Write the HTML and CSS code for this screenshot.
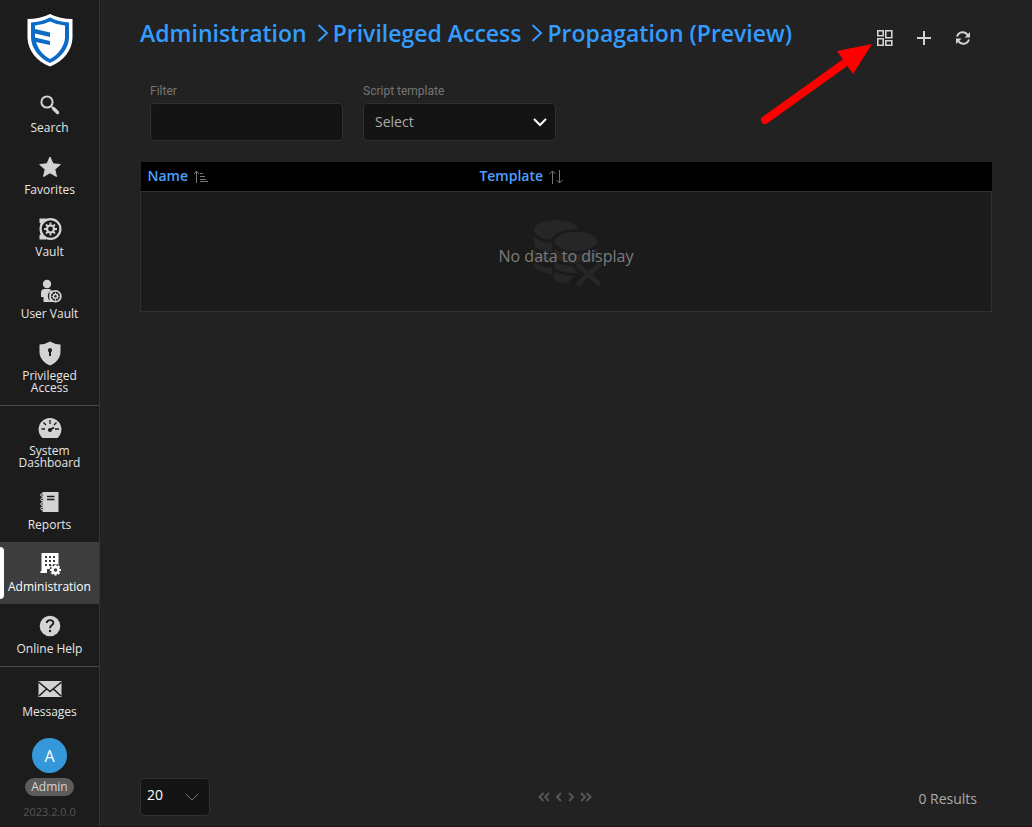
FILE: index.html
```html
<!DOCTYPE html>
<html lang="en">
<head>
<meta charset="utf-8">
<title>Propagation (Preview)</title>
<link rel="stylesheet" href="styles.css">
</head>
<body>
<div class="app">
  <nav class="sidebar" aria-label="Main">
    <a class="logo" href="#" aria-label="Home">
      <svg width="46" height="54" viewBox="0 0 46 54">
        <path fill="#fff" d="M23 1Q33 6 45.500 6V25C45 37 37 48 23 53.500C9 48 1 37 .500 25V6Q13 6 23 1Z"/>
        <path fill="#0d6bc8" d="M23 4.500Q32 9 42 9.500V25C41.500 35 34 45 23 50C12 45 4.500 35 4 25V9.500Q14 9 23 4.500Z"/>
        <path fill="#fff" d="M23 8.500Q30 12 38 12.500V25C37.500 33 31 42 23 46C16 42 11 36 9 29L23 32V28L8 24.500V20.500L23 24V19.500L8 16V12.500Q16 12 23 8.500Z"/>
      </svg>
    </a>
    <div class="group">
      <a class="item" href="#"><svg class="icon" viewBox="0 0 22 22"><circle cx="8" cy="8" r="5.600" fill="none" stroke="#d3d3d3" stroke-width="2"/><path d="M14.500 14.500L18.500 18.500" stroke="#d3d3d3" stroke-width="3.400" stroke-linecap="round"/><path d="M12 12L15 15" stroke="#d3d3d3" stroke-width="1.500"/></svg><span>Search</span></a>
      <a class="item" href="#"><svg class="icon" viewBox="0 0 22 22"><path fill="#d3d3d3" stroke="#d3d3d3" stroke-linejoin="round" d="M11 1L14 7.800L21.300 8.500L15.800 13.400L17.500 20.500L11 16.800L4.500 20.500L6.200 13.400L.700 8.500L8 7.800Z"/></svg><span>Favorites</span></a>
      <a class="item" href="#"><svg class="icon" viewBox="0 0 22 22"><path fill="#d3d3d3" d="M.500 .500H7V21.500H.500V17H1.500V5H.500Z"/><circle cx="11.500" cy="11" r="9.900" fill="#1c1c1c" stroke="#d3d3d3" stroke-width="2.200"/><circle cx="11.500" cy="11" r="3.500" fill="none" stroke="#d3d3d3" stroke-width="2.200"/><path stroke="#d3d3d3" stroke-width="1.800" d="M11.500 4.500V8M11.500 14V17.500M5 11H8M15 11H18M7 6.500L9.200 8.700M13.800 13.300L16 15.500M16 6.500L13.800 8.700M9.200 13.300L7 15.500"/></svg><span>Vault</span></a>
      <a class="item" href="#"><svg class="icon" viewBox="0 0 22 22"><g fill="#d3d3d3"><circle cx="8" cy="4" r="4.200"/><path d="M5.500 9H11.500V22H4.500V17H2V13Q2 9 5.500 9Z"/></g><circle cx="16" cy="16" r="7.200" fill="#1c1c1c"/><path fill="#d3d3d3" d="M10.500 10.500H14V22H10.500Z"/><circle cx="16.500" cy="16.300" r="5.400" fill="#1c1c1c" stroke="#d3d3d3" stroke-width="1.700"/><circle cx="16.500" cy="16.300" r="2" fill="none" stroke="#d3d3d3" stroke-width="1.400"/><path stroke="#d3d3d3" d="M16.500 12.500V15M16.500 18V20.500M12.500 16.300H15M18 16.300H20.500M13.800 13.600L15.500 15.300M17.500 17.300L19.200 19M19.200 13.600L17.500 15.300M15.500 17.300L13.800 19"/></svg><span>User Vault</span></a>
      <a class="item" href="#"><svg class="icon" viewBox="0 0 22 22"><path fill="#d3d3d3" d="M11-.500Q16 2.500 21.500 2.500V10C21.500 16 17 21 11 23.500C5 21 .500 16 .500 10V2.500Q6 2.500 11-.500Z"/><path fill="#1c1c1c" d="M11 6A2.300 2.300 0 0 1 12 10.200V14H10V10.200A2.300 2.300 0 0 1 11 6Z"/></svg><span>Privileged<br>Access</span></a>
    </div>
    <div class="group">
      <a class="item" href="#"><svg class="icon" viewBox="0 0 22 22"><path fill="#d3d3d3" d="M3.500 21A11.400 11.400 0 1 1 18.500 21Z"/><path stroke="#1c1c1c" stroke-width="1.300" d="M11 3V7M4.500 5.500L7 8M17.500 5.500L15 8M2.500 12H6M16 12H20"/><path stroke="#1c1c1c" stroke-width="2" d="M10 13.500L15 10.500"/><circle cx="11" cy="13" r="2" fill="#1c1c1c"/></svg><span>System<br>Dashboard</span></a>
      <a class="item" href="#"><svg class="icon" viewBox="0 0 22 22"><path fill="#d3d3d3" d="M3.500 1H19.500V21H3.500Z"/><g fill="#1c1c1c" stroke="#d3d3d3"><circle cx="3" cy="4" r="1.300"/><circle cx="3" cy="8.500" r="1.300"/><circle cx="3" cy="13" r="1.300"/><circle cx="3" cy="17.500" r="1.300"/></g><path stroke="#1c1c1c" stroke-width="1.400" d="M8 5.500H15.500M8 8.500H15.500"/></svg><span>Reports</span></a>
      <a class="item active" href="#" aria-current="page"><svg class="icon" viewBox="0 0 22 22"><path fill="#fff" d="M2.500 0H19.500V20H1.500V18H2.500Z"/><path stroke="#3d3d3d" stroke-width="2" stroke-dasharray="2 2" d="M6 4H18M6 8H18M6 12H18"/><path fill="#3d3d3d" d="M8 16H11V20H8Z"/><circle cx="16.500" cy="17" r="6" fill="#3d3d3d"/><circle cx="16.500" cy="17" r="3" fill="none" stroke="#fff" stroke-width="2.400"/><path stroke="#fff" stroke-width="2.200" d="M16.500 11.500V14M16.500 20V22.500M11 17H13.500M19.500 17H22M12.600 13.100L14.300 14.800M18.700 19.200L20.400 20.900M20.400 13.100L18.700 14.800M14.300 19.200L12.600 20.900"/></svg><span>Administration</span></a>
      <a class="item" href="#"><svg class="icon" viewBox="0 0 22 22"><circle cx="11" cy="11" r="10.300" fill="#d3d3d3"/><path fill="none" stroke="#1c1c1c" stroke-width="1.900" d="M7.800 8C8 4.200 14.300 4.200 14.300 8C14.300 10.500 11 10.200 11 13.300"/><circle cx="11" cy="16" r="1.200" fill="#1c1c1c"/></svg><span>Online Help</span></a>
    </div>
    <div class="group">
      <a class="item" href="#"><svg class="icon" viewBox="0 0 22 22"><path fill="#d3d3d3" d="M-.500 3H22.500V19H-.500Z"/><path fill="none" stroke="#1c1c1c" stroke-width="1.600" d="M-.500 4L11 13.500L22.500 4M0 18L7.500 11M22 18L14.500 11"/></svg><span>Messages</span></a>
    </div>
    <button class="avatar" type="button">A</button>
    <span class="badge">Admin</span>
    <span class="version">2023.2.0.0</span>
  </nav>

  <main class="main">
    <header class="header">
      <h1 class="crumbs">
        <a href="#">Administration</a>
        <svg width="12" height="18" viewBox="0 0 12 18"><path d="M1.500 1L10 9L1.500 17"/></svg>
        <a href="#">Privileged Access</a>
        <svg width="12" height="18" viewBox="0 0 12 18"><path d="M1.500 1L10 9L1.500 17"/></svg>
        <a href="#">Propagation (Preview)</a>
      </h1>
      <div class="toolbar">
        <button type="button" aria-label="Templates"><svg class="tiles" width="18" height="18" viewBox="0 0 18 18"><path d="M1.800 1.800H7.200V6.800H1.800ZM9.800 1.800H15.800V8.800H9.800ZM1.800 9.800H7.200V16.200H1.800ZM9.800 11.800H15.800V16.200H9.800Z"/></svg></button>
        <button type="button" aria-label="Add"><svg width="18" height="18" viewBox="0 0 18 18"><path d="M9 2V16M2 9H16"/></svg></button>
        <button type="button" aria-label="Refresh"><svg width="18" height="18" viewBox="0 0 18 18"><path d="M3 7.500C5 2 11 2 13.500 6M15 10.500C13 16 7 16 4.500 12"/><path class="solid" d="M16 3V8.500H10.500ZM2 15V9.500H7.500Z"/></svg></button>
        <svg class="pointer" width="112" height="84" viewBox="0 0 112 84"><path d="M7 78L88 20" stroke="#f00" stroke-width="8" stroke-linecap="round"/><path fill="#f00" d="M114 2L79 9L95 32Z"/></svg>
      </div>
    </header>

    <form class="filters">
      <div class="field"><label for="filter">Filter</label><input id="filter" type="text"></div>
      <div class="field"><label for="template">Script template</label>
        <div class="select"><select id="template"><option>Select</option></select><svg width="14" height="9" viewBox="0 0 14 9"><path d="M1 1L7 7L13 1"/></svg></div>
      </div>
    </form>

    <table class="grid">
      <thead><tr>
        <th class="name" scope="col">Name<svg width="16" height="14" viewBox="0 0 16 14"><path d="M3.500 13V1M1 4L3.500 1L6 4M7 3.500H10M7 6.500H12M7 9.500H13M7 11.500H15"/></svg></th>
        <th scope="col">Template<svg width="16" height="14" viewBox="0 0 16 14"><path d="M4.500 14V1M1.500 4L4.500 1L7.500 4M11.500 0V13M8.500 10L11.500 13L14.500 10"/></svg></th>
      </tr></thead>
      <tbody><tr><td colspan="2">
        <div class="empty">
          <svg width="70" height="68" viewBox="0 0 70 68"><g fill="#262626"><ellipse cx="23" cy="10" rx="22" ry="10"/><path d="M1 16Q6 22 19 23V32Q5 31 1 26ZM1 30Q6 35 19 36V43Q5 42 1 38ZM1 42Q6 47 19 48V54Q4 52 1 46Z"/><ellipse cx="43" cy="21.500" rx="23" ry="11" stroke="#1b1b1b" stroke-width="3"/><path d="M21 28Q27 34 43 34Q59 34 65 28V37Q58 43 43 44Q27 43 21 37ZM21 41Q28 46 39 46L45 53Q25 53 21 47ZM21 51Q28 56 41 56L34 64Q23 62 21 58Z"/></g><path d="M43 44L67 66M67 44L43 66" stroke="#1b1b1b" stroke-width="9"/><path d="M44 44L67 65M67 44L44 65" stroke="#262626" stroke-width="5"/></svg>
          <span>No data to display</span>
        </div>
      </td></tr></tbody>
    </table>

    <footer class="footer">
      <div class="select pages"><select aria-label="Page size"><option>20</option></select><svg width="14" height="9" viewBox="0 0 14 9"><path d="M1 1L7 7L13 1"/></svg></div>
      <div class="pager">
        <button type="button" aria-label="First page"><svg width="12" height="10" viewBox="0 0 12 10"><path d="M5.500 1L1.500 5L5.500 9M11 1L7 5L11 9"/></svg></button>
        <button type="button" aria-label="Previous page"><svg width="6" height="10" viewBox="0 0 6 10"><path d="M5 1L1 5L5 9"/></svg></button>
        <button type="button" aria-label="Next page"><svg width="6" height="10" viewBox="0 0 6 10"><path d="M1 1L5 5L1 9"/></svg></button>
        <button type="button" aria-label="Last page"><svg width="12" height="10" viewBox="0 0 12 10"><path d="M1 1L5 5L1 9M6.500 1L10.500 5L6.500 9"/></svg></button>
      </div>
      <span class="results">0 Results</span>
    </footer>
  </main>
</div>
</body>
</html>
```
FILE: styles.css
```css
* { box-sizing: border-box; }
body { margin: 0; background: #222; color: #d3d3d3; font-family: "Open Sans", sans-serif; font-size: 14px; }
a { color: inherit; text-decoration: none; }
button { padding: 0; border: 0; background: none; color: inherit; font: inherit; }
svg { display: block; flex: none; fill: none; }

.app { display: grid; grid-template-columns: 100px 1fr; min-height: 100vh; border-bottom: 1px solid #1a171a; }

.sidebar { display: flex; flex-direction: column; align-items: center; background: #1c1c1c; border-right: 1px solid #343434; }
.logo { padding: 13px 0 16px; }
.group { width: 100%; }
.group + .group { border-top: 1px solid #484848; }
.item { display: flex; flex-direction: column; align-items: center; gap: 6px; padding: 11px 0; font-size: 12px; line-height: 12px; text-align: center; color: #e6e6e6; }
.icon { width: 22px; height: 22px; overflow: visible; }
.active { position: relative; background: #3d3d3d; color: #fff; }
.active::before { content: ""; position: absolute; left: 0; top: 5px; bottom: 5px; width: 4px; background: #fff; border-radius: 0 4px 4px 0; }
.avatar { width: 35px; height: 35px; margin-top: 9px; border-radius: 50%; background: #3498db; color: #fff; font-size: 16px; font-weight: 500; }
.badge { margin-top: 5px; padding: 0 6px; border-radius: 9px; background: #5c5c5c; font-size: 12px; line-height: 18px; }
.version { margin-top: 8px; font-size: 11px; line-height: 16px; color: #555; }

.main { display: flex; flex-direction: column; padding: 16px 40px 10px; }
.header { display: flex; justify-content: space-between; align-items: flex-start; }
.crumbs { display: flex; align-items: center; gap: 4px; margin: 0; color: #339cff; font-size: 23px; font-weight: 600; line-height: 34px; white-space: nowrap; }
.crumbs svg { margin-left: 6px; stroke: currentColor; stroke-width: 2; }
.toolbar { position: relative; display: flex; gap: 21px; padding: 13px 20px 0 0; }
.toolbar button svg { stroke: #d3d3d3; stroke-width: 2; }
.toolbar button .tiles { stroke-width: 1.6; }
.toolbar .solid { fill: #d3d3d3; stroke: none; }
.pointer { position: absolute; right: 122px; top: 26px; overflow: visible; }

.filters { display: flex; gap: 20px; padding: 34px 10px 21px; }
.field { width: 193px; }
.field label { display: block; margin-bottom: 4px; color: #757575; font: 12px/15px Roboto, sans-serif; }
input, select { display: block; width: 100%; height: 38px; padding: 0 11px 2px; border: 1px solid #303030; border-radius: 4px; background: #141414; color: #aaa; font: 14px "Open Sans", sans-serif; appearance: none; }
.select { position: relative; }
.select svg { position: absolute; right: 9px; top: 15px; stroke: #fff; stroke-width: 2; pointer-events: none; }

.grid { width: 100%; border-collapse: collapse; table-layout: fixed; }
.grid th { height: 29px; padding: 0 7px; background: #000; color: #4da0ff; font-weight: 600; line-height: 20px; text-align: left; }
.grid .name { width: 39%; }
.grid th svg { display: inline-block; margin-left: 5px; vertical-align: -3px; stroke: #777; }
.grid td { height: 120px; padding: 0; border: 1px solid #303030; background: #1b1b1b; }
.empty { display: grid; place-items: center; padding-top: 6px; color: #7d7d7d; font-size: 16px; }
.empty > * { grid-area: 1 / 1; }
.empty svg { margin-left: 4px; }
.empty span { z-index: 1; margin-top: 4px; }

.footer { display: grid; grid-template-columns: 1fr auto 1fr; align-items: center; margin-top: auto; }
.pages { width: 70px; }
.pages select { padding: 0 6px 5px; color: #fff; }
.pages svg { right: 11px; stroke: #777; stroke-width: 1; }
.pager { display: flex; gap: 6px; padding-right: 3px; }
.pager svg { stroke: #555; stroke-width: 2; }
.results { justify-self: end; padding: 2px 15px 0 0; color: #aaa; }
```
